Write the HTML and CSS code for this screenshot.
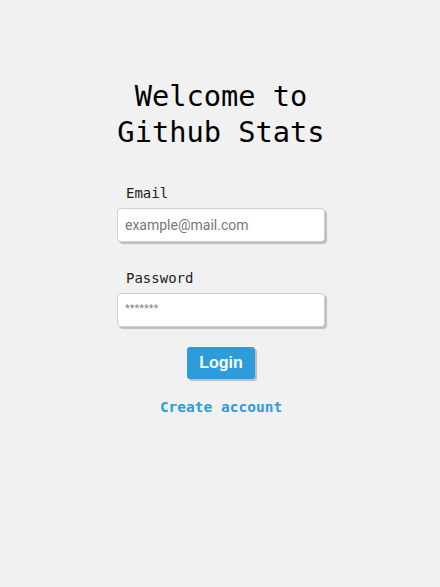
FILE: index.html
```html
<!DOCTYPE html>
<html>
<head>
<meta charset="utf-8">
<link rel="stylesheet" href="styles.css">
</head>
<body>
<main class="page">
  <form class="login">
    <h1 class="title">Welcome to<br>Github Stats</h1>
    <label class="field">
      <span class="label">Email</span>
      <input class="input" type="text" placeholder="example@mail.com">
    </label>
    <label class="field">
      <span class="label">Password</span>
      <input class="input input-pass" type="password" placeholder="*******">
    </label>
    <button class="btn" type="button">Login</button>
    <a class="link" href="#">Create account</a>
  </form>
</main>
</body>
</html>
```
FILE: styles.css
```css
html, body {
  margin: 0;
  padding: 0;
  background: #f1f1f1;
  height: 100%;
}
.page {
  display: flex;
  justify-content: center;
  padding-top: 78px;
}
.login {
  width: 208px;
  display: flex;
  flex-direction: column;
  align-items: center;
  margin-left: 2px;
}
.title {
  margin: 0 -20px 0;
  font-family: "DejaVu Sans Mono", monospace;
  font-weight: normal;
  font-size: 28.7px;
  line-height: 36px;
  text-align: center;
  color: #000;
}
.field {
  display: flex;
  flex-direction: column;
  align-self: stretch;
  margin-top: 33px;
}
.field + .field {
  margin-top: 26px;
}
.label {
  font-family: "DejaVu Sans Mono", monospace;
  font-size: 14px;
  line-height: 20px;
  color: #222;
  padding-left: 9px;
  margin-bottom: 5px;
}
.input {
  box-sizing: border-box;
  height: 34px;
  width: 208px;
  margin: 0;
  padding: 0 7px;
  border: 1px solid #cfcfcf;
  border-radius: 4px;
  background: #fff;
  box-shadow: 2px 2px 1px #bdbdbd;
  font-family: Roboto, "Liberation Sans", sans-serif;
  font-size: 14px;
  outline: none;
}
.input::placeholder {
  color: #777;
}
.input-pass {
  font-size: 11px;
  padding-bottom: 3px;
}
.input-pass::placeholder {
  color: #888;
}
.btn {
  margin-top: 20px;
  width: 68px;
  height: 32px;
  border: none;
  border-radius: 3px;
  background: #2d9cdb;
  color: #fff;
  font-family: "Liberation Sans", Arial, sans-serif;
  font-weight: bold;
  font-size: 16px;
  box-shadow: 2px 2px 1px #bdbdbd;
  padding: 0;
}
.link {
  margin-top: 20px;
  font-family: "DejaVu Sans Mono", monospace;
  font-weight: bold;
  font-size: 14.5px;
  color: #2d9cdb;
  text-decoration: none;
}
```
